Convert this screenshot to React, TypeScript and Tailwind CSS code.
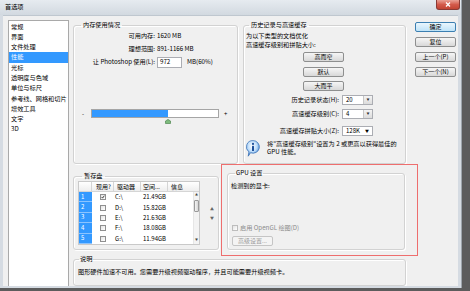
import clsx from "clsx";
import type { ReactNode } from "react";

const font = "font-['Noto_Sans_CJK_SC','Noto_Sans',sans-serif]";

const pages = ["常规", "界面", "文件处理", "性能", "光标", "透明度与色域", "单位与标尺", "参考线、网格和切片", "增效工具", "文字", "3D"];

const disks = [
  { n: "1", drive: "C:\\", space: "21.49GB", on: true },
  { n: "2", drive: "D:\\", space: "15.82GB" },
  { n: "3", drive: "E:\\", space: "21.63GB" },
  { n: "4", drive: "F:\\", space: "18.08GB" },
  { n: "5", drive: "G:\\", space: "11.94GB" },
];

function Button({ children, primary, disabled, className }: { children: ReactNode; primary?: boolean; disabled?: boolean; className?: string }) {
  return (
    <div
      className={clsx(
        "flex h-[10px] w-[41px] items-center justify-center rounded-[2px] border text-[6px] leading-none",
        primary && "border-[#3c7fb1] bg-linear-to-b from-[#eaf6fd] to-[#bfe3f8]",
        !primary && !disabled && "border-[#8e8f8f] bg-linear-to-b from-[#f6f6f6] to-[#d8d8d8]",
        disabled && "border-[#c5c5c5] bg-[#f4f4f4] text-[#9a9a9a]",
        className,
      )}
    >
      {children}
    </div>
  );
}

function Group({ title, legend = "ml-[6px] px-[2px]", className, children }: { title: string; legend?: string; className?: string; children: ReactNode }) {
  return (
    <fieldset className={clsx("rounded-[3px] border border-[#d2d2d2] shadow-[inset_1px_1px_0_#fff,1px_1px_0_#fff]", className)}>
      <legend className={clsx("text-[6.2px] leading-[8px]", legend)}>{title}</legend>
      {children}
    </fieldset>
  );
}

function Check({ checked, disabled }: { checked?: boolean; disabled?: boolean }) {
  return (
    <span
      className={clsx(
        "flex h-[6px] w-[6px] shrink-0 items-center justify-center border bg-linear-to-br from-[#e4e4e4] to-white",
        disabled ? "border-[#bdbdbd]" : "border-[#8f8f8f]",
      )}
    >
      {checked && (
        <svg viewBox="0 0 6 6" className="h-[6px] w-[6px]">
          <path d="M1 3.1 2.4 4.7 5 1" fill="none" stroke="#1c1c1c" strokeWidth="1.2" />
        </svg>
      )}
    </span>
  );
}

function Combo({ value, editable }: { value: string; editable?: boolean }) {
  return (
    <div className="flex h-[10px] w-[31px] items-center border border-[#abadb3] bg-white pl-[3px] text-[6px] leading-none">
      <span className="flex-1">{value}</span>
      {editable ? (
        <span className="mr-[3px] text-[4px]">▼</span>
      ) : (
        <span className="flex h-full w-[9px] items-center justify-center border-l border-[#c7c7c7] bg-linear-to-b from-[#f4f4f4] to-[#dcdcdc] text-[3px] text-[#333]">
          ▼
        </span>
      )}
    </div>
  );
}

function InfoIcon() {
  return (
    <svg viewBox="0 0 14 17" className="h-[17px] w-[14px] shrink-0">
      <defs>
        <radialGradient id="ib" cx="45%" cy="35%" r="65%">
          <stop offset="0" stopColor="#ffffff" />
          <stop offset="0.55" stopColor="#bcdcfa" />
          <stop offset="1" stopColor="#3a7fd0" />
        </radialGradient>
      </defs>
      <path d="M7 0.6a6.3 6.3 0 1 1-2.4 12.1L2.2 16.2l0.7-4.3A6.3 6.3 0 0 1 7 0.6z" fill="url(#ib)" stroke="#2f68b0" strokeWidth="0.7" />
      <circle cx="7" cy="3.9" r="1.1" fill="#1d4f9a" />
      <rect x="6" y="5.7" width="2" height="5.2" rx="0.5" fill="#1d4f9a" />
    </svg>
  );
}

function ScratchTable() {
  return (
    <div className="w-[122px] border border-[#c9c9c9] bg-white text-[6px] leading-none">
      <div className="flex h-[10px] border-b border-[#d5d5d5] bg-linear-to-b from-white to-[#eeeeee]">
        <div className="w-[13px] border-r border-[#d5d5d5]" />
        <div className="flex w-[22px] items-center border-r border-[#d5d5d5] pl-[4px]">现用?</div>
        <div className="flex w-[27px] items-center border-r border-[#d5d5d5] pl-[3px]">驱动器</div>
        <div className="flex w-[27px] items-center border-r border-[#d5d5d5] pl-[2px]">空间...</div>
        <div className="flex flex-1 items-center pl-[3px]">信息</div>
      </div>
      <div className="relative">
        {disks.map((d) => (
          <div key={d.n} className="flex h-[10.4px]">
            <div className="flex w-[13px] items-center border-b border-[#8cc4ff] bg-[#3399ff] pl-[2px] text-white">{d.n}</div>
            <div className="flex w-[22px] items-center justify-center">
              <Check checked={d.on} />
            </div>
            <div className="flex w-[27px] items-center pl-[1px]">{d.drive}</div>
            <div className="flex w-[27px] items-center pl-[2px]">{d.space}</div>
          </div>
        ))}
        <div className="absolute top-0 right-0 bottom-0 flex w-[6px] flex-col items-center border-l border-[#e6e6e6] bg-[#f3f3f3] text-[3px] text-[#444]">
          <span className="mt-[2px]">▲</span>
          <span className="mt-[3px] h-[12px] w-[5px] rounded-[1px] border border-[#9a9a9a] bg-linear-to-r from-[#f4f4f4] to-[#d6d6d6]" />
          <span className="mt-auto mb-[2px]">▼</span>
        </div>
      </div>
    </div>
  );
}

export default function App() {
  return (
    <div className={clsx("h-[291px] w-[470px] overflow-hidden bg-[#5c5c5c]", font, "text-black")}>
      <div className="flex h-[288px] w-[462px] flex-col overflow-hidden border-r border-[#9da4ab] bg-[#d5dbe2]">
        <div className="flex h-[15px] shrink-0 items-start bg-linear-to-b from-[#e6ebf0] to-[#d2d9e0]">
          <span className="mt-[3px] ml-[5px] text-[6.2px] leading-[8px]">首选项</span>
          <div className="mr-[1px] ml-auto flex h-[10px] w-[24px] items-center justify-center rounded-b-[3px] border border-t-0 border-[#8a3a35] bg-linear-to-b from-[#e9a196] via-[#d35a4b] to-[#c24433]">
            <svg viewBox="0 0 6 5" className="h-[5px] w-[6px]">
              <path d="M1 0.5 5 4.5M5 0.5 1 4.5" stroke="#fff" strokeWidth="1.3" />
            </svg>
          </div>
        </div>

        <div className="mx-[3px] flex min-h-0 flex-1 overflow-hidden border-t border-[#bfc7cf] bg-[#f0f0f0] pt-[4px] pl-[5px]">
          {/* page list */}
          <div className="h-[280px] w-[61px] shrink-0 border border-[#a9a9a9] bg-white pt-[0.5px]">
            {pages.map((p, i) => (
              <div key={p} className={clsx("h-[10.3px] pl-[2px] text-[6.2px] leading-[10.3px] whitespace-nowrap", i === 3 && "bg-[#3399ff] text-white")}>
                {p}
              </div>
            ))}
          </div>

          {/* settings */}
          <div className="relative ml-[4px] flex w-[333px] shrink-0 flex-col">
            <div className="mt-[1px] flex gap-[5px]">
              <Group title="内存使用情况" legend="ml-[7px] px-[2px]" className="h-[143px] w-[165px]">
                <div className="pt-[1px] text-[6.2px] leading-none">
                  <div className="flex h-[13px] items-center">
                    <span className="w-[81px] text-right">可用内存:</span>
                    <span className="ml-[2px]">1620 MB</span>
                  </div>
                  <div className="flex h-[13px] items-center">
                    <span className="w-[81px] text-right">理想范围:</span>
                    <span className="ml-[2px]">891-1166 MB</span>
                  </div>
                  <div className="flex h-[13px] items-center">
                    <span className="w-[81px] text-right whitespace-nowrap">让 Photoshop 使用(L):</span>
                    <span className="ml-[2px] flex h-[11px] w-[25px] items-center border border-[#abadb3] bg-white pl-[2px]">972</span>
                    <span className="ml-[5px]">MB(60%)</span>
                  </div>
                  <div className="mt-[40px] flex h-[9px] items-center pl-[8px]">
                    <span className="w-[3px] text-[6px]">-</span>
                    <div className="relative ml-[6px] h-[9px] w-[128px] border border-[#a5a5a5] bg-white">
                      <div className="h-full w-[76px] bg-[#3399ff]" />
                      <svg viewBox="0 0 6 5" className="absolute top-[9px] left-[73px] h-[5px] w-[6px]">
                        <polygon points="0.5,4.5 0.5,2 3,0.4 5.5,2 5.5,4.5" fill="#7dbb7d" stroke="#3f7a3f" strokeWidth="0.6" />
                      </svg>
                    </div>
                    <span className="ml-[5px] text-[6px]">+</span>
                  </div>
                </div>
              </Group>

              <Group title="历史记录与高速缓存" legend="ml-[5px] px-[2px]" className="h-[143px] w-[163px]">
                <div className="pt-[2px] pl-[2px] text-[6.2px] leading-[9px]">
                  <div>为以下类型的文档优化</div>
                  <div>高速缓存级别和拼贴大小:</div>
                </div>
                <div className="ml-[59px] flex flex-col">
                  <Button className="mt-[3px]">高而窄</Button>
                  <Button className="mt-[5px]">默认</Button>
                  <Button className="mt-[4px]">大而平</Button>
                </div>
                <div className="text-[6.2px] leading-none">
                  <div className="mt-[4px] flex items-center">
                    <span className="w-[95px] text-right">历史记录状态(H):</span>
                    <span className="ml-[3px]"><Combo value="20" /></span>
                  </div>
                  <div className="mt-[4px] flex items-center">
                    <span className="w-[95px] text-right">高速缓存级别(C):</span>
                    <span className="ml-[3px]"><Combo value="4" /></span>
                  </div>
                  <div className="mt-[7px] flex items-center">
                    <span className="w-[95px] text-right">高速缓存拼贴大小(Z):</span>
                    <span className="ml-[3px]"><Combo value="128K" editable /></span>
                  </div>
                </div>
                <div className="mt-[4px] flex pl-[2px]">
                  <InfoIcon />
                  <div className="ml-[7px] text-[6.2px] leading-[8px] whitespace-nowrap">
                    将"高速缓存级别"设置为 2 或更高以获得最佳的
                    <br />
                    GPU 性能。
                  </div>
                </div>
              </Group>
            </div>

            <div className="flex items-start">
              <Group title="暂存盘" legend="ml-[8px] px-[2px]" className="mt-[8px] h-[78px] w-[146px]">
                <div className="mt-[1px] flex items-start pl-[4px]">
                  <ScratchTable />
                  <div className="mt-[24px] ml-[10px] flex flex-col text-[4px] leading-[9px] text-[#666]">
                    <span>▲</span>
                    <span>▼</span>
                  </div>
                </div>
              </Group>

              <Group title="GPU 设置" legend="ml-[7px] px-[1px]" className="mt-[5px] ml-[8px] h-[81px] w-[178px]">
                <div className="flex h-[71px] flex-col pb-[2px] pl-[3px] text-[6.2px]">
                  <div className="mt-[4px] leading-[9px]">检测到的显卡:</div>
                  <div className="mt-auto flex h-[8px] items-center pl-[1px] text-[#8c8c8c]">
                    <Check disabled />
                    <span className="ml-[2px] leading-none">启用 OpenGL 绘图(D)</span>
                  </div>
                  <Button disabled className="mt-[4px] ml-[1px]">高级设置...</Button>
                </div>
              </Group>
            </div>

            <Group title="说明" legend="ml-[5px] px-[1px]" className="mt-[5px] h-[40px] w-[333px]">
              <div className="mt-[4px] pl-[4px] text-[6.2px] leading-[9px] whitespace-nowrap">
                图形硬件加速不可用。您需要升级视频驱动程序，并且可能需要升级视频卡。
              </div>
            </Group>

            {/* annotation box */}
            <div className="pointer-events-none absolute top-[144px] left-[148px] h-[92px] w-[197px] border border-[#ee6e6e]" />
          </div>

          {/* dialog buttons */}
          <div className="mt-[2px] ml-[9px] flex flex-col gap-[5px]">
            <Button primary>确定</Button>
            <Button>复位</Button>
            <Button>上一个(P)</Button>
            <Button>下一个(N)</Button>
          </div>
        </div>
        <div className="h-[2px] shrink-0" />
      </div>
    </div>
  );
}
